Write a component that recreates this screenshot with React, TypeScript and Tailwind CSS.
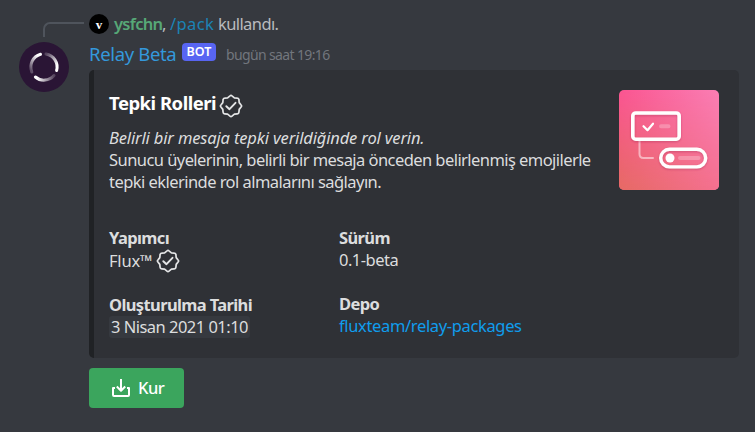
import type { ReactNode } from "react";

function VerifiedBadge({ className = "" }: { className?: string }) {
  return (
    <svg viewBox="0 0 24 24" className={`h-6 w-6 shrink-0 ${className}`} fill="none" stroke="#e4e5e6" strokeLinecap="round" strokeLinejoin="round">
      <path
        strokeWidth="1.7"
        d="M11 1.900Q12 1 13 1.900L15.400 3.800 18.300 4.100Q19.800 4.200 19.900 5.700L20.200 8.600 22.100 11Q23 12 22.100 13L20.200 15.400 19.900 18.300Q19.800 19.800 18.300 19.900L15.400 20.200 13 22.100Q12 23 11 22.100L8.600 20.200 5.700 19.900Q4.200 19.800 4.100 18.300L3.800 15.400 1.900 13Q1 12 1.900 11L3.800 8.600 4.100 5.700Q4.200 4.200 5.700 4.100L8.600 3.800Z"
      />
      <path strokeWidth="1.9" d="m7.300 12.200 3.200 3 6-6.400" />
    </svg>
  );
}

function RelayAvatar() {
  return (
    <svg viewBox="0 0 50 50" className="h-[50px] w-[50px]">
      <defs>
        <linearGradient id="arcLeft" x1="0.8" y1="0" x2="0.2" y2="1">
          <stop offset="0.1" stopColor="#fff" />
          <stop offset="1" stopColor="#fff" stopOpacity="0.25" />
        </linearGradient>
        <linearGradient id="arcRight" x1="0" y1="0" x2="0.7" y2="1">
          <stop offset="0" stopColor="#fff" stopOpacity="0.2" />
          <stop offset="0.9" stopColor="#fff" />
        </linearGradient>
        <linearGradient id="arcBottom" x1="0" y1="0" x2="1" y2="0">
          <stop offset="0.1" stopColor="#fff" />
          <stop offset="1" stopColor="#fff" stopOpacity="0.2" />
        </linearGradient>
      </defs>
      <circle cx="25" cy="25" r="25" fill="#2a1535" />
      <g fill="none" strokeWidth="3" strokeLinecap="round">
        <path d="M21.500 12.300A13.200 13.200 0 0 0 12.800 30" stroke="url(#arcLeft)" />
        <path d="M27 12A13.200 13.200 0 0 1 37.600 28.500" stroke="url(#arcRight)" />
        <path d="M16.400 35A13.200 13.200 0 0 0 35 33.500" stroke="url(#arcBottom)" />
      </g>
    </svg>
  );
}

function PackageArtwork() {
  return (
    <svg viewBox="0 0 100 100" className="h-[100px] w-[100px] shrink-0 rounded-[5px]">
      <defs>
        <linearGradient id="artTop" x1="0" y1="0" x2="1" y2="0">
          <stop offset="0" stopColor="#fb5592" />
          <stop offset="1" stopColor="#fa7eb4" />
        </linearGradient>
        <linearGradient id="artBottom" x1="0" y1="0" x2="1" y2="0">
          <stop offset="0" stopColor="#e66a64" />
          <stop offset="1" stopColor="#f4708f" />
        </linearGradient>
        <linearGradient id="artFade" x1="0" y1="0" x2="0" y2="1">
          <stop offset="0" stopColor="#000" />
          <stop offset="1" stopColor="#fff" />
        </linearGradient>
        <mask id="artMask" style={{ maskType: "luminance" }}>
          <rect width="100" height="100" fill="url(#artFade)" />
        </mask>
        <filter id="artShadow" x="-20%" y="-20%" width="140%" height="150%">
          <feDropShadow dx="0" dy="1" stdDeviation="1" floodColor="#8a2045" floodOpacity="0.35" />
        </filter>
      </defs>
      <rect width="100" height="100" fill="url(#artTop)" />
      <rect width="100" height="100" fill="url(#artBottom)" mask="url(#artMask)" />
      <path d="M20.500 51V64Q20.500 68 24.500 68H34" fill="none" stroke="#fff" strokeOpacity="0.5" strokeWidth="2" strokeLinecap="round" />
      <g filter="url(#artShadow)" fill="none" stroke="#fff">
        <rect x="13.800" y="23" width="46.400" height="26.200" rx="3" strokeWidth="3.600" />
        <rect x="41.700" y="59.300" width="45" height="17.600" rx="8.800" strokeWidth="3.400" />
      </g>
      <path d="m24.500 36.200 4 4 5.500-6.500" fill="none" stroke="#fff" strokeWidth="2.200" strokeLinecap="round" strokeLinejoin="round" />
      <path d="M42 36.200H49.500M61 68H79.500" stroke="#fff" strokeOpacity="0.25" strokeWidth="4" strokeLinecap="round" />
      <circle cx="51" cy="68" r="4.500" fill="#fff" />
    </svg>
  );
}

function Field({ name, children }: { name: ReactNode; children: ReactNode }) {
  return (
    <div className="flex h-[66px] flex-col text-[16.5px] leading-[22px]">
      <div className="font-bold tracking-[-0.62px] text-[#dcddde]">{name}</div>
      <div className="flex h-[22px] items-center text-[#dcddde]">{children}</div>
    </div>
  );
}

export default function App() {
  return (
    <div className="flex h-[432px] w-[755px] overflow-hidden bg-[#36393f] font-['Noto_Sans',sans-serif] whitespace-nowrap">
      <div className="w-[89px] shrink-0">
        <div className="mt-[22px] ml-[43px] h-[15px] w-[41px] rounded-tl-[7px] border-t-2 border-l-2 border-[#4f545c]" />
        <div className="mt-[5px] ml-[19px]">
          <RelayAvatar />
        </div>
      </div>
      <main className="w-[650px] shrink-0">
        <div className="mt-[13px] flex h-[22px] items-center text-[16.5px] leading-[22px] text-[#b9bbbe]">
          <div className="mr-[5px] flex h-5 w-5 items-center justify-center rounded-full bg-black font-['Liberation_Serif',serif] text-[13px] leading-none font-bold text-white">
            v
          </div>
          <span className="w-[48px] font-semibold tracking-[-0.7px] text-[#57a877]">ysfchn</span>
          <span className="w-[8px]">,</span>
          <span className="w-[48px] tracking-[0.4px] text-[#1b83b5]">/pack</span>
          <span className="tracking-[-0.6px]">kullandı.</span>
        </div>
        <header className="mt-[6px] flex h-[26px] items-center leading-[26px]">
          <span className="w-[87px] text-[18.5px] tracking-[-0.35px] text-[#3498db]">Relay Beta</span>
          <span className="mr-[10px] mb-[4px] ml-[6px] flex h-[18px] w-[34px] items-center justify-center rounded-[4px] bg-[#5865f2] text-[12.5px] leading-[18px] font-semibold text-white">
            BOT
          </span>
          <span className="mt-[2px] text-[14px] tracking-[-0.63px] text-[#72767d]">bugün saat 19:16</span>
        </header>
        <article className="mt-[3px] h-[288px] w-[650px] rounded-[5px] border-l-[5px] border-[#202225] bg-[#2f3136] pt-5 pr-5 pl-[15px]">
          <div className="flex h-[137px] justify-between">
            <div>
              <h1 className="flex h-[26px] items-center text-[18.5px] leading-[26px] font-bold tracking-[-0.5px] text-white">
                Tepki Rolleri
                <VerifiedBadge className="mt-[5px] ml-[3px]" />
              </h1>
              <p className="mt-[11px] text-[16.5px] leading-[22px] text-[#dcddde]">
                <em className="tracking-[-0.15px]">Belirli bir mesaja tepki verildiğinde rol verin.</em>
                <br />
                <span className="tracking-[-0.56px]">Sunucu üyelerinin, belirli bir mesaja önceden belirlenmiş emojilerle</span>
                <br />
                <span className="tracking-[-0.55px]">tepki eklerinde rol almalarını sağlayın.</span>
              </p>
            </div>
            <PackageArtwork />
          </div>
          <div className="flex">
            <div className="w-[230px]">
              <Field name="Yapımcı">
                <span className="pt-[2px] tracking-[-0.2px]">Flux™</span>
                <VerifiedBadge className="mt-[2px] ml-[3px]" />
              </Field>
              <div className="pt-px">
                <Field name="Oluşturulma Tarihi">
                  <span className="rounded-[3px] bg-[#36393f] pr-[2px] pl-[2px] tracking-[-0.52px]">3 Nisan 2021 01:10</span>
                </Field>
              </div>
            </div>
            <div className="w-[230px]">
              <Field name="Sürüm">
                <span className="tracking-[-0.5px]">0.1-beta</span>
              </Field>
              <Field name="Depo">
                <span className="tracking-[-0.35px] text-[#0f9ded]">fluxteam/relay-packages</span>
              </Field>
            </div>
          </div>
        </article>
        <button className="mt-[10px] flex h-10 w-[95px] items-center rounded-[4px] bg-[#3ba55d] pl-[22px] text-[16.5px] font-medium tracking-[-0.5px] text-white">
          <svg viewBox="0 0 20 20" className="mr-[7px] h-5 w-5" fill="none" stroke="#fff" strokeWidth="2" strokeLinejoin="round">
            <path d="M4 10H2V17Q2 18 3 18H17Q18 18 18 17V10H16M10 1V12.500M5.800 8.500 10 12.700 14.200 8.500" />
          </svg>
          Kur
        </button>
      </main>
    </div>
  );
}
